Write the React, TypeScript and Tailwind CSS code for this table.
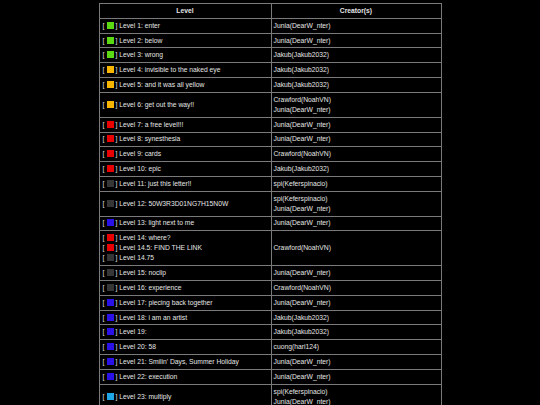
const SQUARE: Record<string, string> = {
  g: 'bg-[#5ad812]',
  y: 'bg-[#f7b500]',
  r: 'bg-[#e80000]',
  d: 'bg-[#363636]',
  b: 'bg-[#2a12e6]',
  c: 'bg-[#1ea6e6]',
};

type Row = { levels: [string, string][]; creators: string[] };

const JUNIA = 'Junia(DearW_nter)';
const JAKUB = 'Jakub(Jakub2032)';
const CRAW = 'Crawford(NoahVN)';
const SPI = 'spi(Keferspinacio)';

const ROWS: Row[] = [
  { levels: [['g', 'Level 1: enter']], creators: [JUNIA] },
  { levels: [['g', 'Level 2: below']], creators: [JUNIA] },
  { levels: [['g', 'Level 3: wrong']], creators: [JAKUB] },
  { levels: [['y', 'Level 4: invisible to the naked eye']], creators: [JAKUB] },
  { levels: [['y', 'Level 5: and it was all yellow']], creators: [JAKUB] },
  { levels: [['y', 'Level 6: get out the way!!']], creators: [CRAW, JUNIA] },
  { levels: [['r', 'Level 7: a free level!!!']], creators: [JUNIA] },
  { levels: [['r', 'Level 8: synesthesia']], creators: [JUNIA] },
  { levels: [['r', 'Level 9: cards']], creators: [CRAW] },
  { levels: [['r', 'Level 10: epic']], creators: [JAKUB] },
  { levels: [['d', 'Level 11: just this letter!!']], creators: [SPI] },
  { levels: [['d', 'Level 12: 50W3R3D01NG7H15N0W']], creators: [SPI, JUNIA] },
  { levels: [['b', 'Level 13: light next to me']], creators: [JUNIA] },
  {
    levels: [
      ['r', 'Level 14: where?'],
      ['r', 'Level 14.5: FIND THE LINK'],
      ['d', 'Level 14.75'],
    ],
    creators: [CRAW],
  },
  { levels: [['d', 'Level 15: noclip']], creators: [JUNIA] },
  { levels: [['d', 'Level 16: experience']], creators: [CRAW] },
  { levels: [['b', 'Level 17: piecing back together']], creators: [JUNIA] },
  { levels: [['b', 'Level 18: i am an artist']], creators: [JAKUB] },
  { levels: [['b', 'Level 19:']], creators: [JAKUB] },
  { levels: [['b', 'Level 20: 58']], creators: ['cuong(hari124)'] },
  { levels: [['b', "Level 21: Smilin' Days, Summer Holiday"]], creators: [JUNIA] },
  { levels: [['b', 'Level 22: execution']], creators: [JUNIA] },
  { levels: [['c', 'Level 23: multiply']], creators: [SPI, JUNIA] },
];

const cell = 'border border-[#7a7a7a] px-[2px] py-[1.92px] align-middle';

export default function App() {
  return (
    <div
      className="h-[405px] overflow-hidden bg-black pt-[3px] text-[#e6e6e6]"
      style={{ fontFamily: '"Liberation Sans", Arial, sans-serif' }}
    >
      <table className="mx-auto w-[343px] table-fixed border-collapse text-[6.75px] leading-[10px]">
        <thead>
          <tr>
            <th className={`${cell} w-[172px] text-center font-bold`}>Level</th>
            <th className={`${cell} text-center font-bold`}>Creator(s)</th>
          </tr>
        </thead>
        <tbody>
          {ROWS.map((row, i) => (
            <tr key={i}>
              <td className={`${cell} text-left`}>
                {row.levels.map(([c, t], j) => (
                  <div key={j} className="whitespace-nowrap pl-[1px]">
                    <span>[</span>
                    <span
                      className={`ml-[2.5px] mr-[1.5px] inline-block h-[7px] w-[7px] align-[-1px] ${SQUARE[c]}`}
                    />
                    <span>] {t}</span>
                  </div>
                ))}
              </td>
              <td className={`${cell} text-left`}>
                {row.creators.map((c, j) => (
                  <div key={j} className="whitespace-nowrap">
                    {c}
                  </div>
                ))}
              </td>
            </tr>
          ))}
        </tbody>
      </table>
    </div>
  );
}
